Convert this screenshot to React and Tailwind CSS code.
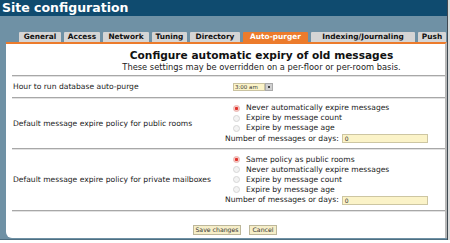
import React from "react";

const FONT = { fontFamily: '"DejaVu Sans", Verdana, sans-serif' };

const TABS = [
  { label: "General", w: "w-[42px]" },
  { label: "Access", w: "w-[36px]" },
  { label: "Network", w: "w-[46px]" },
  { label: "Tuning", w: "w-[35px]" },
  { label: "Directory", w: "w-[50px]" },
  { label: "Auto-purger", w: "w-[65px]", active: true },
  { label: "Indexing/Journaling", w: "w-[104px]" },
  { label: "Push", w: "w-[28px]" },
];

function Radio({ checked }) {
  return (
    <span
      className={
        "inline-block w-[7px] h-[7px] rounded-full border mr-[6px] shrink-0 " +
        (checked
          ? "border-[#eab0ac] bg-[radial-gradient(circle,#e2322c_0_38%,#f7cbc6_48%)]"
          : "border-[#d6d6d6] bg-[#f3f3f3]")
      }
    />
  );
}

function RadioRow({ checked, children }) {
  return (
    <div className="flex items-center h-[10px] pl-[8px] whitespace-nowrap">
      <Radio checked={checked} />
      <span>{children}</span>
    </div>
  );
}

function NumberRow() {
  return (
    <div className="flex items-center h-[11px] whitespace-nowrap">
      <span>Number of messages or days:</span>
      <span className="ml-[3px] w-[86px] h-[9px] border border-[#cdc6a2] bg-[#fbf3c8] text-[6px] leading-[7px] pl-[2px] text-[#333]">
        0
      </span>
    </div>
  );
}

function Rule() {
  return <div className="ml-[6px] h-[2px] border-t border-[#a8a8a8] border-b border-b-[#e2e2e2]" />;
}

export default function App() {
  return (
    <div className="w-[450px] h-[243px] bg-white overflow-hidden flex" style={FONT}>
      <div className="w-[447px] flex flex-col">
        {/* header */}
        <div className="h-[16px] bg-[#0f4b6f] text-white font-bold text-[12.5px] leading-[16px] pl-[2px] whitespace-nowrap">
          Site configuration
        </div>

        <div className="h-[223px] bg-[#6f91a5] pl-[6px] pt-[16px] flex flex-col">
          {/* tabs */}
          <div className="flex gap-[3px] pl-[13px] h-[10px] items-end">
            {TABS.map((t) => (
              <div
                key={t.label}
                className={
                  "h-[10px] shrink-0 text-[7.4px] font-bold leading-[10px] text-center rounded-t-[1px] whitespace-nowrap " +
                  t.w +
                  " " +
                  (t.active ? "bg-[#ec7b2c] text-white" : "bg-[#d5d5d5] text-[#111]")
                }
              >
                {t.label}
              </div>
            ))}
          </div>

          {/* panel */}
          <div className="flex-1 bg-white border-t-[2px] border-[#ec7b2c] border-r-[2px] border-r-[#b8b8b8] rounded-bl-[6px] text-[7.6px] text-[#222] flex flex-col">
            <div className="pl-[72px] text-center pt-[5px] whitespace-nowrap">
              <div className="text-[10.6px] font-bold leading-[13px] text-[#111]">
                Configure automatic expiry of old messages
              </div>
              <div className="text-[8.3px] leading-[10px] text-[#222]">
                These settings may be overridden on a per-floor or per-room basis.
              </div>
            </div>

            <div className="mt-[3px]">
              <Rule />
            </div>

            <div className="flex items-center h-[20px]">
              <div className="w-[219px] pl-[7px]">Hour to run database auto-purge</div>
              <div className="pl-[8px] flex items-center">
                <span className="w-[32px] h-[8px] bg-[#fbf3c8] border border-[#c9c2a0] text-[5.5px] leading-[6px] pl-[1px] whitespace-nowrap text-[#333]">
                  3:00 am
                </span>
                <span className="w-[8px] h-[8px] bg-[#d0d0d0] border border-[#aaa] flex items-center justify-center">
                  <span className="w-[2px] h-[2px] bg-[#444]" />
                </span>
              </div>
            </div>

            <Rule />

            <div className="flex items-center h-[49px]">
              <div className="w-[219px] pl-[7px] whitespace-nowrap">Default message expire policy for public rooms</div>
              <div className="flex flex-col">
                <RadioRow checked>Never automatically expire messages</RadioRow>
                <RadioRow>Expire by message count</RadioRow>
                <RadioRow>Expire by message age</RadioRow>
                <NumberRow />
              </div>
            </div>

            <Rule />

            <div className="flex items-center h-[60px]">
              <div className="w-[219px] pl-[7px] whitespace-nowrap">Default message expire policy for private mailboxes</div>
              <div className="flex flex-col">
                <RadioRow checked>Same policy as public rooms</RadioRow>
                <RadioRow>Never automatically expire messages</RadioRow>
                <RadioRow>Expire by message count</RadioRow>
                <RadioRow>Expire by message age</RadioRow>
                <NumberRow />
              </div>
            </div>

            <Rule />

            <div className="flex gap-[8px] pl-[187px] pt-[13px] text-[6.2px] whitespace-nowrap">
              <span className="w-[48px] h-[10px] leading-[8px] text-center bg-[#f6eec8] border border-[#bdb79a] text-[#333]">
                Save changes
              </span>
              <span className="w-[28px] h-[10px] leading-[8px] text-center bg-[#f6eec8] border border-[#bdb79a] text-[#333]">
                Cancel
              </span>
            </div>
          </div>
          <div className="h-[1px]" />
        </div>
        <div className="h-[1px] bg-[#4f6f82]" />
      </div>
      <div className="w-[3px] h-[240px] border-l border-[#3f4a52] bg-[#dcdcdc]" />
    </div>
  );
}
